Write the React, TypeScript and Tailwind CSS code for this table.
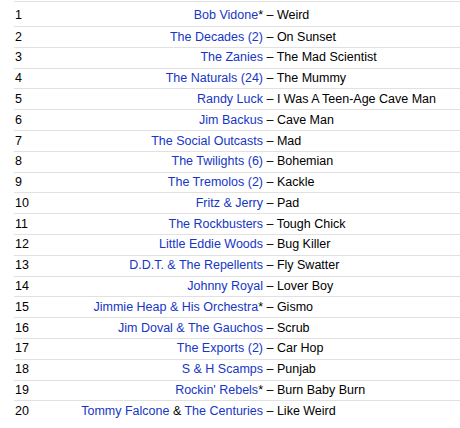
import React from "react";

type Part = { t: string; link?: boolean };
type Row = { artist: Part[]; title: string };

const L = (t: string): Part => ({ t, link: true });
const P = (t: string): Part => ({ t });

const rows: Row[] = [
  { artist: [L("Bob Vidone"), P("*")], title: "Weird" },
  { artist: [L("The Decades (2)")], title: "On Sunset" },
  { artist: [L("The Zanies")], title: "The Mad Scientist" },
  { artist: [L("The Naturals (24)")], title: "The Mummy" },
  { artist: [L("Randy Luck")], title: "I Was A Teen-Age Cave Man" },
  { artist: [L("Jim Backus")], title: "Cave Man" },
  { artist: [L("The Social Outcasts")], title: "Mad" },
  { artist: [L("The Twilights (6)")], title: "Bohemian" },
  { artist: [L("The Tremolos (2)")], title: "Kackle" },
  { artist: [L("Fritz & Jerry")], title: "Pad" },
  { artist: [L("The Rockbusters")], title: "Tough Chick" },
  { artist: [L("Little Eddie Woods")], title: "Bug Killer" },
  { artist: [L("D.D.T. & The Repellents")], title: "Fly Swatter" },
  { artist: [L("Johnny Royal")], title: "Lover Boy" },
  { artist: [L("Jimmie Heap & His Orchestra"), P("*")], title: "Gismo" },
  { artist: [L("Jim Doval & The Gauchos")], title: "Scrub" },
  { artist: [L("The Exports (2)")], title: "Car Hop" },
  { artist: [L("S & H Scamps")], title: "Punjab" },
  { artist: [L("Rockin' Rebels"), P("*")], title: "Burn Baby Burn" },
  { artist: [L("Tommy Falcone"), P(" & "), L("The Centuries")], title: "Like Weird" },
];

export default function App() {
  return (
    <div
      className="w-[460px] h-[428px] bg-white overflow-hidden text-[12.5px] text-black"
      style={{ fontFamily: '"Liberation Sans", Arial, Helvetica, sans-serif' }}
    >
      <div className="ml-[14px] mt-[1px] border-t border-[#e1e1e1]">
        {rows.map((r, i) => (
          <div
            key={i}
            className={
              i === 0
                ? "grid grid-cols-[249px_1fr] items-center h-[24px] pt-[3px]"
                : "grid grid-cols-[249px_1fr] items-center h-[20.8px] border-t border-[#e1e1e1]"
            }
          >
            <div className="flex justify-between items-center pl-[1px]">
              <span>{i + 1}</span>
              <span className="whitespace-pre">
                {r.artist.map((p, j) => (
                  <span key={j} className={p.link ? "text-[#1636c4]" : "text-black"}>
                    {p.t}
                  </span>
                ))}
              </span>
            </div>
            <div className="whitespace-pre">{" – " + r.title}</div>
          </div>
        ))}
      </div>
    </div>
  );
}
